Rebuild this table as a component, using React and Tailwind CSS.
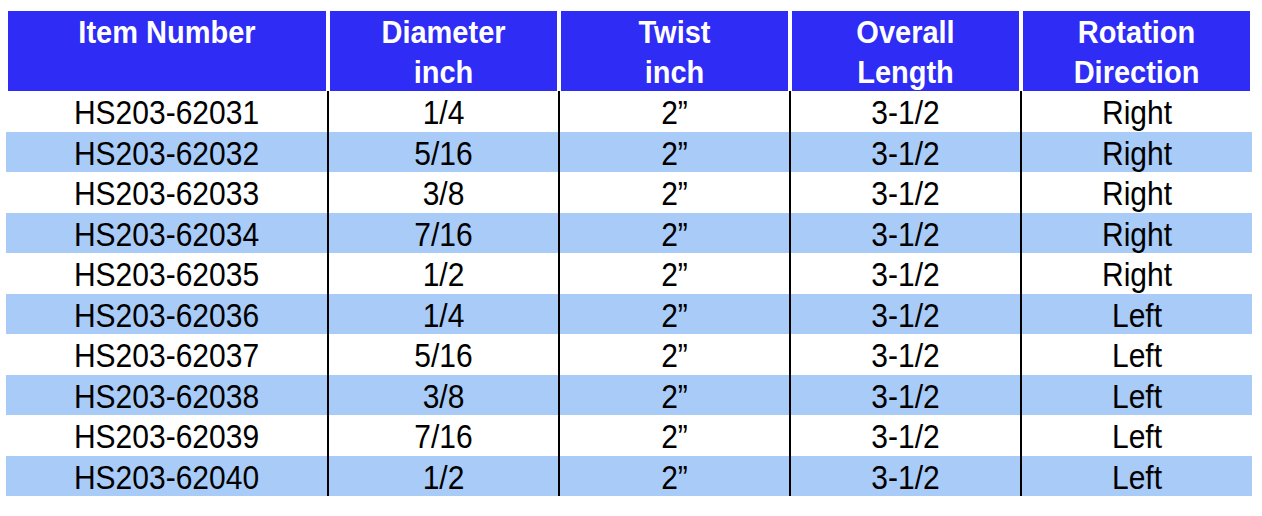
// Drill bit spec table
const headers = [
  ['Item Number'],
  ['Diameter', 'inch'],
  ['Twist', 'inch'],
  ['Overall', 'Length'],
  ['Rotation', 'Direction'],
];

const rows = [
  ['HS203-62031', '1/4', 'Right'],
  ['HS203-62032', '5/16', 'Right'],
  ['HS203-62033', '3/8', 'Right'],
  ['HS203-62034', '7/16', 'Right'],
  ['HS203-62035', '1/2', 'Right'],
  ['HS203-62036', '1/4', 'Left'],
  ['HS203-62037', '5/16', 'Left'],
  ['HS203-62038', '3/8', 'Left'],
  ['HS203-62039', '7/16', 'Left'],
  ['HS203-62040', '1/2', 'Left'],
];

const headW = ['w-[318px]', 'w-[227px]', 'w-[227px]', 'w-[227px]', 'w-[227px]'];

export default function App() {
  return (
    <div className="w-[1262px] h-[516px] bg-white pt-[11px] font-['Liberation_Sans',Arial,sans-serif]">
      {/* Header */}
      <div className="flex gap-[4px] pl-[8px] h-[80px]">
        {headers.map((h, i) => (
          <div key={i} className={`${headW[i]} bg-[#2e2cf5] text-white font-bold text-[29px] leading-[40px] pt-[2px] flex flex-col items-center`}>
            {h.map(line => <span key={line} className="scale-y-105">{line}</span>)}
          </div>
        ))}
      </div>

      {/* Body */}
      <div className="ml-[6px] w-[1246px] text-black text-[30px]">
        {rows.map(([item, dia, dir], i) => (
          <div key={item} className={`flex h-[40.5px] ${i % 2 ? 'bg-[#a9cbf8]' : 'bg-white'}`}>
            <div className="w-[323px] flex items-center justify-center pt-[3px] border-r-2 border-black"><span className="scale-y-108">{item}</span></div>
            <div className="w-[231px] flex items-center justify-center pt-[3px] border-r-2 border-black"><span className="scale-y-108">{dia}</span></div>
            <div className="w-[231px] flex items-center justify-center pt-[3px] border-r-2 border-black"><span className="scale-y-108">2”</span></div>
            <div className="w-[231px] flex items-center justify-center pt-[3px] border-r-2 border-black"><span className="scale-y-108">3-1/2</span></div>
            <div className="flex-1 flex items-center justify-center pt-[3px]"><span className="scale-y-108">{dir}</span></div>
          </div>
        ))}
      </div>
    </div>
  );
}
